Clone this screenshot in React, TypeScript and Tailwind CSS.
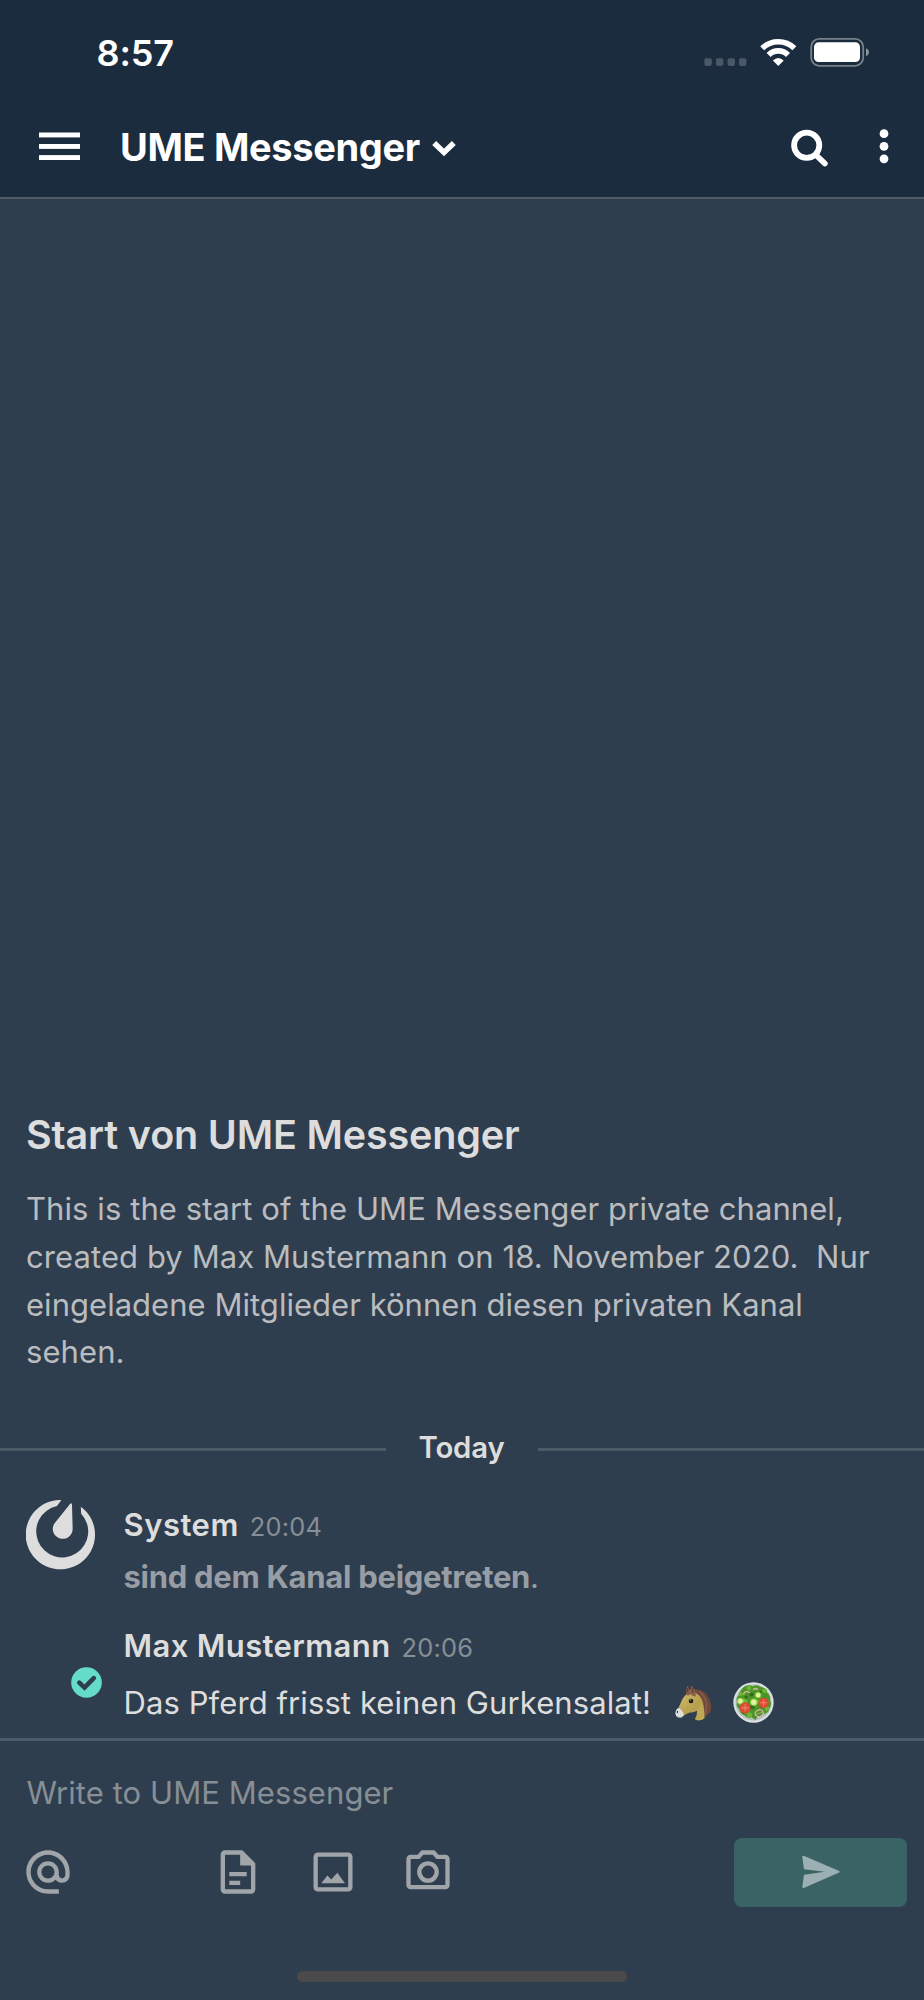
import type { ReactNode } from "react";

function StatusIcons() {
  return (
    <svg className="h-[40px] w-[176px]" viewBox="700 33 176 40" fill="none">
      <g fill="#4b5867">
        <rect x="704.4" y="58.3" width="7.4" height="7.6" rx="1.8" />
        <rect x="716" y="58.3" width="7.4" height="7.6" rx="1.8" />
        <rect x="727.5" y="58.3" width="7.4" height="7.6" rx="1.8" />
        <rect x="739" y="58.3" width="7.4" height="7.6" rx="1.8" />
      </g>
      <g stroke="#fff" strokeWidth="5.6">
        <path d="M762.2 48.3A23.2 23.2 0 0 1 794.4 48.3" />
        <path d="M768.6 55A13.4 13.4 0 0 1 788 55" />
      </g>
      <path d="M772.9 60.6Q778.3 55.2 783.7 60.6L778.3 66Z" fill="#fff" />
      <rect x="811.2" y="38.9" width="52" height="26.9" rx="8" stroke="#76818c" strokeWidth="1.8" />
      <rect x="814" y="42.3" width="46" height="19.7" rx="4.6" fill="#fff" />
      <path d="M866 48.2C870 49.4 870 54.8 866 56Z" fill="#8a949d" />
    </svg>
  );
}

function MenuIcon() {
  return (
    <svg className="h-[30px] w-[41px]" viewBox="0 0 41 30" fill="#fff">
      <rect y="0.5" width="41" height="4.9" />
      <rect y="12" width="41" height="4.9" />
      <rect y="23.1" width="41" height="4.9" />
    </svg>
  );
}

function ChevronIcon() {
  return (
    <svg className="h-[18px] w-[26px]" viewBox="0 0 26 18" fill="none" stroke="#fff" strokeWidth="5.6">
      <path d="M3.2 2.9L13 12.4L22.8 2.9" />
    </svg>
  );
}

function SearchIcon() {
  return (
    <svg className="h-[40px] w-[40px]" viewBox="0 0 40 40" fill="none" stroke="#fff">
      <circle cx="17.7" cy="18.3" r="12.6" strokeWidth="5.8" />
      <path d="M27.5 28.5L35.8 36.5" strokeWidth="5.8" strokeLinecap="round" />
    </svg>
  );
}

function MoreIcon() {
  return (
    <svg className="h-[40px] w-[10px]" viewBox="0 0 10 40" fill="#fff">
      <circle cx="5" cy="6.7" r="4.4" />
      <circle cx="5" cy="19.3" r="4.4" />
      <circle cx="5" cy="31.8" r="4.4" />
    </svg>
  );
}

function MattermostLogo() {
  return (
    <svg className="h-[70px] w-[70px]" viewBox="24 20 210 210" fill="#ddd">
      <path d="M130 20A104 104 0 1 0 188.500 40L189.500 61A78 78 0 1 1 117 38Z" />
      <path d="M156 32Q162 26 162 35L164 106A29.800 29.800 0 1 1 111 88Z" />
    </svg>
  );
}

function OnlineBadge() {
  return (
    <svg className="h-[31px] w-[31px]" viewBox="0 0 31 31" fill="none">
      <circle cx="15.5" cy="15.500" r="15.300" fill="#65dcc8" />
      <path d="M8.300 15.700L13.500 20.600L22.800 11.200" stroke="#2f3e4e" strokeWidth="4.600" strokeLinejoin="miter" strokeLinecap="round" />
    </svg>
  );
}

function HorseEmoji() {
  return (
    <svg className="h-[36px] w-[37px]" viewBox="13 23 111 108" role="img" aria-label="horse face">
      <defs>
        <linearGradient id="coat" x1="0" y1="0" x2="1" y2="1">
          <stop offset="0" stopColor="#d2bd70" />
          <stop offset="0.6" stopColor="#b59e4c" />
          <stop offset="1" stopColor="#c7ae56" />
        </linearGradient>
      </defs>
      <path d="M66 36C88 34 106 44 113 60C120 72 123 88 121 98L116 107L106 118L98 112L86 70Z" fill="#70493b" />
      <path d="M88 44Q106 58 108 86L104 112" fill="none" stroke="#8a6150" strokeWidth="4" />
      <path d="M48 50Q58 41 74 46Q94 56 98 80Q101 100 102 122Q94 131 80 129Q74 128 73 125Q80 112 79 100Q68 106 56 106Q44 110 38 116L20 100Q28 82 35 66Q40 56 48 50Z" fill="url(#coat)" />
      <path d="M80 100Q91 88 91 72Q102 99 94 127" fill="#c1a853" />
      <path d="M22 92Q14 97 14 108Q14 116 22 120Q34 123 38 116Q42 110 34 101Q28 92 22 92Z" fill="#dfe0e1" />
      <path d="M16 115Q27 123 38 115Q36 122 27 122Q19 121 16 115Z" fill="#8e9297" />
      <ellipse cx="20.500" cy="104" rx="2" ry="3.500" fill="#30343a" />
      <path d="M46 53L48 31L51 25L55 36L59 39L61 27Q65 23 68 33L73 39L76 57Q65 58 60 51Q55 56 46 53Z" fill="#8c604b" />
      <path d="M50 32L52 46M64 30L67 47" stroke="#634033" strokeWidth="4" />
      <circle cx="61" cy="71" r="7" fill="#211c19" />
      <circle cx="59" cy="68" r="2" fill="#a7a38d" />
    </svg>
  );
}

function SaladEmoji() {
  return (
    <svg className="h-[41px] w-[41px]" viewBox="190 17 122 122" role="img" aria-label="green salad">
      <circle cx="251" cy="78" r="60" fill="#dce1e3" />
      <circle cx="251" cy="78" r="54" fill="#b7c1c2" />
      <path d="M226 29Q238 24 249 30Q262 22 273 32Q290 34 291 48Q303 57 300 71Q307 83 298 96Q297 109 282 112Q275 120 263 120L257 130L245 122Q233 127 224 116Q210 111 209 98Q197 91 202 77Q197 64 208 56Q210 40 226 29Z" fill="#4f9426" />
      <g fill="#6db534">
        <circle cx="237" cy="35" r="7" />
        <circle cx="284" cy="43" r="7" />
        <circle cx="225" cy="74" r="8" />
        <circle cx="291" cy="96" r="7" />
        <circle cx="239" cy="115" r="8" />
        <circle cx="213" cy="53" r="6" />
        <circle cx="267" cy="76" r="6" />
      </g>
      <g fill="#2f6c1a">
        <circle cx="245" cy="54" r="6" />
        <circle cx="247" cy="92" r="7" />
        <circle cx="275" cy="89" r="5" />
        <circle cx="221" cy="108" r="4" />
        <circle cx="272" cy="47" r="4" />
        <circle cx="229" cy="62" r="5" />
      </g>
      <g fill="none" stroke="#d8b6a7" strokeWidth="4">
        <path d="M221 54Q226 40 241 49" />
        <path d="M250 40Q257 33 264 40" />
        <ellipse cx="268" cy="110" rx="12" ry="10" transform="rotate(-20 268 110)" />
        <path d="M259 114L276 107" strokeWidth="2" />
      </g>
      <g fill="#e1f4a4" stroke="#8bcf47" strokeWidth="3">
        <circle cx="212" cy="74" r="8.500" />
        <circle cx="252" cy="77" r="9.500" />
        <circle cx="265" cy="56" r="8" />
      </g>
      <g fill="#dc4b36">
        <circle cx="226" cy="94" r="16.500" />
        <circle cx="281" cy="79" r="15.500" />
      </g>
      <g fill="none" stroke="#f08a69" strokeWidth="3">
        <path d="M226 84V104M216 94H236M271 79H291M281 70V88" />
      </g>
    </svg>
  );
}

const toolIcons = {
  at: "M12 2C6.480 2 2 6.480 2 12s4.480 10 10 10h5v-2h-5c-4.340 0-8-3.660-8-8s3.660-8 8-8 8 3.660 8 8v1.430c0 .790-.710 1.570-1.500 1.570s-1.500-.780-1.500-1.570V12c0-2.760-2.240-5-5-5s-5 2.240-5 5 2.240 5 5 5c1.380 0 2.640-.560 3.540-1.470.650.890 1.770 1.470 2.960 1.470 1.970 0 3.500-1.600 3.500-3.570V12c0-5.520-4.480-10-10-10zm0 13c-1.660 0-3-1.340-3-3s1.340-3 3-3 3 1.340 3 3-1.340 3-3 3z",
  file: "M6 2A2 2 0 0 0 4 4V20A2 2 0 0 0 6 22H18A2 2 0 0 0 20 20V8L14 2H6M6 4H13V9H18V20H6V4M8 12V14H16V12H8M8 16V18H13V16H8Z",
  image: "M19 5V19H5V5H19M19 3H5A2 2 0 0 0 3 5V19A2 2 0 0 0 5 21H19A2 2 0 0 0 21 19V5A2 2 0 0 0 19 3ZM6.600 17.200L9.400 13.600L11.200 15.500L14 12.400L17.500 17.200Z",
  camera: "M20 4H16.830L15 2H9L7.170 4H4A2 2 0 0 0 2 6V18A2 2 0 0 0 4 20H20A2 2 0 0 0 22 18V6A2 2 0 0 0 20 4M20 18H4V6H8.050L9.880 4H14.120L15.950 6H20V18M12 7A5 5 0 0 0 7 12A5 5 0 0 0 12 17A5 5 0 0 0 17 12A5 5 0 0 0 12 7M12 15A3 3 0 0 1 9 12A3 3 0 0 1 12 9A3 3 0 0 1 15 12A3 3 0 0 1 12 15Z",
};

function ToolIcon({ path }: { path: string }) {
  return (
    <svg className="mb-[2px] h-[52px] w-[52px]" viewBox="0 0 24 24" fill="#a0a5aa" fillRule="evenodd">
      <path d={path} />
    </svg>
  );
}

function MessageHead({ name, time, nameClass }: { name: string; time: string; nameClass: string }) {
  return (
    <div className="flex h-[38px] items-baseline gap-[11px] leading-[38px]">
      <span className={`text-[31px] font-semibold text-[#ddd] ${nameClass}`}>{name}</span>
      <span className="text-[25.4px] tracking-[0.2px] text-[#868e96]">{time}</span>
    </div>
  );
}

function Message({ avatar, children }: { avatar: ReactNode; children: ReactNode }) {
  return (
    <div className="flex">
      <div className="w-[123.5px] shrink-0">{avatar}</div>
      <div>{children}</div>
    </div>
  );
}

export default function App() {
  return (
    <div className="flex h-[2000px] w-[924px] flex-col overflow-hidden bg-[#2f3e4e] font-['Inter','Liberation_Sans',sans-serif] whitespace-nowrap">
      <header className="h-[199px] shrink-0 border-b-2 border-[#4f5b69] bg-[#1b2c3e] text-white">
        <div className="flex h-[97px] items-center justify-between pt-[9px] pr-[48px] pl-[96.5px]">
          <span className="text-[36px] font-semibold tracking-[-0.1px]">8:57</span>
          <StatusIcons />
        </div>
        <div className="flex h-[100px] items-center pr-[35px] pl-[39px]">
          <MenuIcon />
          <h1 className="ml-[40px] text-[38px] font-bold tracking-[-0.34px]">UME Messenger</h1>
          <div className="mt-[4px] ml-[11px]">
            <ChevronIcon />
          </div>
          <div className="ml-auto flex items-center gap-[50px]">
            <SearchIcon />
            <MoreIcon />
          </div>
        </div>
      </header>

      <main className="flex flex-1 flex-col justify-end pb-[15px]">
        <section className="pl-[26px]">
          <h2 className="text-[39.5px] leading-[48px] font-semibold tracking-[-0.16px] text-[#ddd]">Start von UME Messenger</h2>
          <p className="mt-[26px] text-[31px] leading-[47.67px] tracking-[0.08px] whitespace-pre text-[#babcbf]">
            {"This is the start of the UME Messenger private channel,\ncreated by Max Mustermann on 18. November 2020.  Nur\n"}
            <span className="tracking-[0.03px]">eingeladene Mitglieder können diesen privaten Kanal</span>
            {"\nsehen."}
          </p>
        </section>

        <div className="mt-[55px] flex h-[36px] items-center">
          <div className="h-[3px] flex-1 bg-[#4c5966]" />
          <span className="w-[152px] pr-[1px] pb-[2px] text-center text-[29.3px] leading-[34px] font-semibold tracking-[-0.15px] text-[#ddd]">Today</span>
          <div className="h-[3px] flex-1 bg-[#4c5966]" />
        </div>

        <div className="mt-[33px]">
          <Message avatar={<div className="ml-[26px]"><MattermostLogo /></div>}>
            <div className="pt-[6px]">
              <MessageHead name="System" time="20:04" nameClass="tracking-[0.5px]" />
              <p className="mt-[13px] text-[31px] leading-[39px] tracking-[-0.28px] text-[#979da4]">
                <strong className="font-bold">sind dem Kanal beigetreten</strong>.
              </p>
            </div>
          </Message>
          <div className="mt-[31px]">
            <Message avatar={<div className="mt-[40px] ml-[71px]"><OnlineBadge /></div>}>
              <MessageHead name="Max Mustermann" time="20:06" nameClass="tracking-[0.38px]" />
              <div className="mt-[17px] flex h-[41px] items-center text-[31px] tracking-[0.09px] text-[#ddd]">
                <span className="pt-[1px]">Das Pferd frisst keinen Gurkensalat!</span>
                <div className="ml-[23.5px]">
                  <HorseEmoji />
                </div>
                <div className="ml-[21px]">
                  <SaladEmoji />
                </div>
              </div>
            </Message>
          </div>
        </div>
      </main>

      <footer className="h-[262px] shrink-0 border-t-3 border-[#4f5b69]">
        <div className="pt-[32px] pl-[26.5px] text-[31px] leading-[39px] tracking-[0.07px] text-[#868e96]">Write to UME Messenger</div>
        <div className="mt-[26px] flex h-[69px] items-center pr-[17px] pl-[21.6px]">
          <ToolIcon path={toolIcons.at} />
          <div className="ml-[138px] flex gap-[43px]">
            <ToolIcon path={toolIcons.file} />
            <ToolIcon path={toolIcons.image} />
            <ToolIcon path={toolIcons.camera} />
          </div>
          <button className="ml-auto flex h-[69px] w-[173px] items-center justify-center rounded-[8px] bg-[#3a6366]" aria-label="Send">
            <svg className="mb-[1px] h-[34px] w-[38px]" viewBox="484 616 115 101" fill="#9cb0b3">
              <path d="M485 621Q485 615 491 618L595 663Q601 666 595 669L491 714Q485 717 485 711L490 675L553 666L490 658Z" />
            </svg>
          </button>
        </div>
        <div className="mx-auto mt-[64px] h-[11px] w-[330px] rounded-full bg-[#4a4a4a]" />
      </footer>
    </div>
  );
}
